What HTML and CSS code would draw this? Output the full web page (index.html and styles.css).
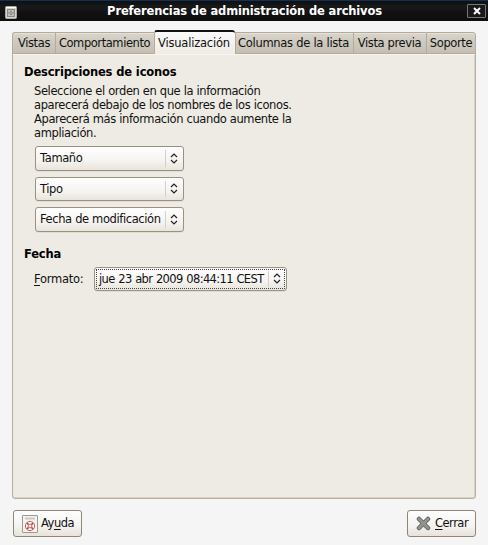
FILE: index.html
```html
<!DOCTYPE html>
<html lang="es">
<head>
<meta charset="utf-8">
<title>Preferencias de administración de archivos</title>
<link rel="stylesheet" href="styles.css">
</head>
<body>
<header class="titlebar">
  <svg class="app-icon" width="12" height="13" viewBox="0 0 12 13"><rect x=".5" y=".5" width="11" height="12" rx="1" fill="#d8d8d2" stroke="#aaa9a2"/><path d="M1 1.500h10" stroke="#fff"/><rect x="2.500" y="3.500" width="7" height="7" fill="#c0c0ba" stroke="#88887f"/><path d="M3 7h6M5 5.500h2M5 8.500h2" stroke="#88887f"/></svg>
  <h1>Preferencias de administración de archivos</h1>
  <button class="close" aria-label="Cerrar ventana"><svg width="8" height="8" viewBox="0 0 8 8"><path d="M1 1l6 6M7 1L1 7" stroke="#fff" stroke-width="2"/></svg></button>
</header>
<main>
  <nav class="tabs">
    <span class="tab t1">Vistas</span><span class="tab t2">Comportamiento</span><span class="tab t3 active">Visualización</span><span class="tab t4">Columnas de la lista</span><span class="tab t5">Vista previa</span><span class="tab t6">Soporte</span>
  </nav>
  <section class="panel">
    <h2>Descripciones de iconos</h2>
    <p>Seleccione el orden en que la información<br>aparecerá debajo de los nombres de los iconos.<br>Aparecerá más información cuando aumente la<br>ampliación.</p>
    <div class="combos">
      <div class="combo"><span>Tamaño</span><svg class="arrows" width="8" height="11" viewBox="0 0 8 11"><path d="M1 4l3-3 3 3M1 7l3 3 3-3"/></svg></div>
      <div class="combo"><span>Tipo</span><svg class="arrows" width="8" height="11" viewBox="0 0 8 11"><path d="M1 4l3-3 3 3M1 7l3 3 3-3"/></svg></div>
      <div class="combo"><span>Fecha de modificación</span><svg class="arrows" width="8" height="11" viewBox="0 0 8 11"><path d="M1 4l3-3 3 3M1 7l3 3 3-3"/></svg></div>
    </div>
    <h2 class="date">Fecha</h2>
    <div class="format"><label><u>F</u>ormato:</label>
      <div class="combo focused"><span>jue 23 abr 2009 08:44:11 CEST</span><svg class="arrows" width="8" height="11" viewBox="0 0 8 11"><path d="M1 4l3-3 3 3M1 7l3 3 3-3"/></svg></div>
    </div>
  </section>
  <footer>
    <button class="action help"><svg width="16" height="18" viewBox="0 0 16 18"><rect x=".5" y=".5" width="15" height="17" rx=".5" fill="#f4f3f0" stroke="#9a9992"/><path d="M3 3.500h10" stroke="#c9cbc4" stroke-width="2"/><circle cx="8" cy="11" r="3.300" fill="none" stroke="#fff" stroke-width="2.600"/><path d="M4.800 7.800l2 2M11.200 7.800l-2 2M4.800 14.200l2-2M11.200 14.200l-2-2" stroke="#c8524e" stroke-width="1.800"/><circle cx="8" cy="11" r="4.600" fill="none" stroke="#b8504d" stroke-width=".9"/><circle cx="8" cy="11" r="1.900" fill="#f4f3f0" stroke="#b8504d" stroke-width=".8"/></svg><span>Ay<u>u</u>da</span></button>
    <button class="action quit"><svg width="15" height="15" viewBox="0 0 15 15"><path d="M3 3l9 9M12 3l-9 9" stroke="#60635e" stroke-width="4.500" stroke-linecap="round"/><path d="M3 3l9 9M12 3l-9 9" stroke="#92958f" stroke-width="2.700" stroke-linecap="round"/></svg><span><u>C</u>errar</span></button>
  </footer>
</main>
</body>
</html>
```
FILE: styles.css
```css
* { box-sizing: border-box; }
body { margin: 0; width: 488px; height: 545px; overflow: hidden; background: #f5f5f5; color: #111; font: 11.5px/14px "DejaVu Sans", sans-serif; letter-spacing: -.39px; word-spacing: .1px; white-space: nowrap; }
h1, h2, p { margin: 0; font-size: 11.5px; line-height: 14px; }
h1, h2 { letter-spacing: -.16px; }
h2 { color: #000; }
button { font: inherit; color: inherit; padding: 0; letter-spacing: inherit; }
svg { display: block; flex: none; }
.titlebar { height: 21px; display: flex; align-items: center; padding: 0 2px 0 5px; border-top: 1px solid #14304c; background: linear-gradient(#0c0f14, #191919 30%, #111 60%, #0d0d0d); }
.titlebar h1 { flex: 1; text-align: center; color: #fff; padding: 0 0 1px 5px; }
.app-icon { margin-top: 3px; }
.close { width: 19px; height: 14px; display: flex; align-items: center; justify-content: center; border: 1px solid #777; border-radius: 1px; background: #191919; }
main { padding: 9px 12px 0; }
.tabs { display: flex; height: 24px; align-items: flex-end; position: relative; z-index: 1; margin-bottom: -1px; }
.tab { height: 22px; flex: none; text-align: center; line-height: 21px; border: 1px solid #b4ab9c; border-right: 0; background: linear-gradient(#d9d5cc, #cdc8bd 50%, #c5bfb3); box-shadow: inset 0 1px #e5e1d9; }
.t1 { width: 43px; border-top-left-radius: 3px; }
.t2 { width: 99px; padding-right: 1px; letter-spacing: -.43px; }
.t3 { width: 81px; letter-spacing: -.2px; }
.t4 { width: 118px; padding-right: 2px; border-left: 1px solid #b4ab9c; letter-spacing: -.3px; }
.t5 { width: 73px; padding-right: 1px; }
.t6 { width: 50px; border-right: 1px solid #b4ab9c; border-top-right-radius: 3px; }
.tab.active { height: 24px; line-height: 22px; padding-right: 2px; border-top: 2px solid #111; border-bottom: 0; border-radius: 3px 3px 0 0; background: linear-gradient(#fafafa, #efece6); box-shadow: none; }
.panel { height: 446px; padding: 11px 11px 0; background: #eeebe4; border: 1px solid #b8ae9e; border-radius: 0 0 3px 3px; box-shadow: inset 0 1px #f7f5f1, inset -1px 0 #d9d3c8, inset 0 -1px #d9d3c8; }
.panel p { margin: 5px 0 0 10px; }
.combos { margin: 6px 0 0 11px; display: grid; gap: 6px; }
.combo { display: flex; align-items: center; justify-content: space-between; width: 149px; height: 24.5px; padding: 0 5px 0 4px; border: 1px solid #9b9182; border-radius: 3px; background: linear-gradient(#fefefe, #f6f4f1 60%, #e8e4dc); position: relative; box-shadow: 0 1px #e2ded5; }
.combo::after { content: ""; position: absolute; right: 17px; top: 3px; bottom: 3px; border-left: 1px solid #d5d0c7; }
.arrows path { fill: none; stroke: #222; stroke-width: 1.2; }
.date { margin-top: 15px; }
.format { display: flex; align-items: center; margin: 6px 0 0 10px; }
.format label { width: 60px; letter-spacing: -.25px; }
.focused { width: 193px; letter-spacing: -.62px; word-spacing: .5px; }
.focused::before { content: ""; position: absolute; inset: 1px; border: 1px dotted #444; }
u { text-decoration-thickness: 1px; text-underline-offset: 2px; }
footer { display: flex; justify-content: space-between; margin-top: 11px; padding-left: 1px; }
.action { display: flex; align-items: center; width: 69px; height: 27px; border: 1px solid #8f8678; border-radius: 3px; background: linear-gradient(#fefefe, #f5f3f0 60%, #e7e2da); padding: 0 0 2px 8px; gap: 3px; letter-spacing: -.5px; }
.help svg { margin-top: 2px; }
.quit { gap: 4px; }
.quit svg { margin-top: 2px; }
```
